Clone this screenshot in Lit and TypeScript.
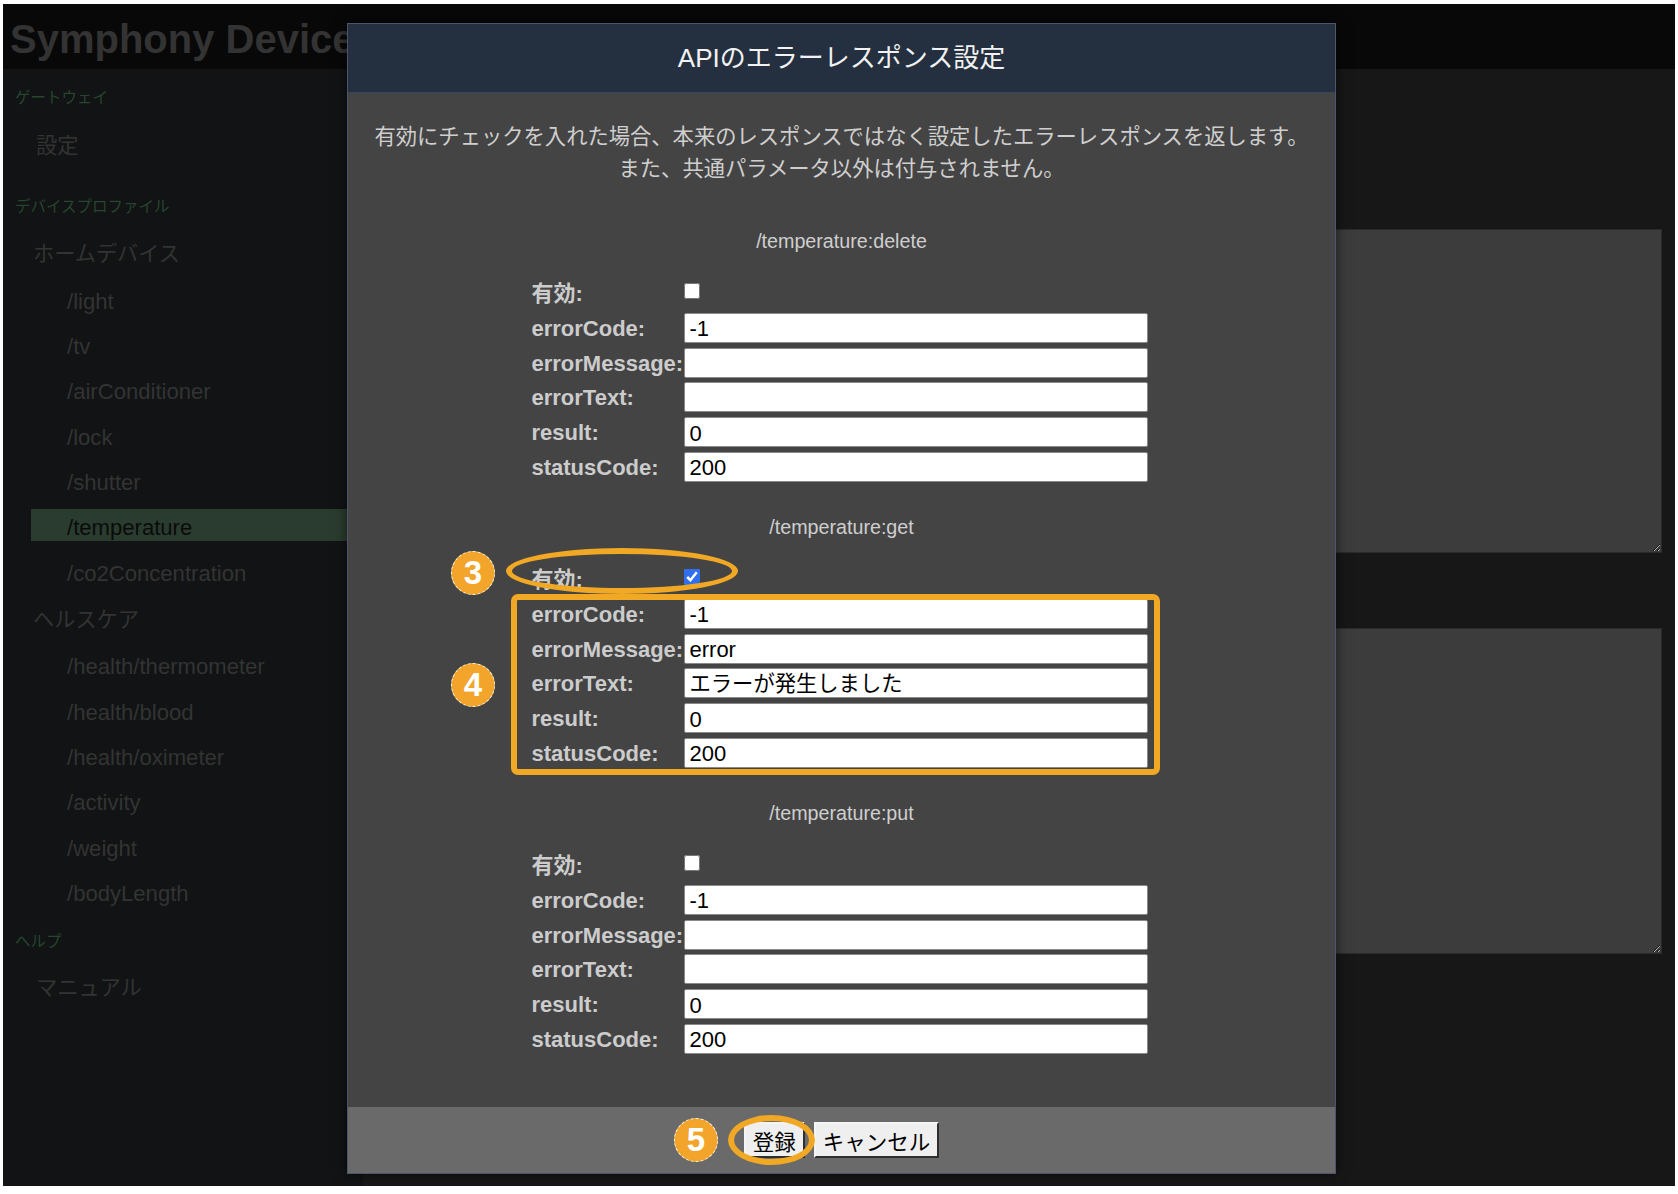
import { LitElement, css, html } from 'lit';
import { customElement } from 'lit/decorators.js';

const HOME = ['/light', '/tv', '/airConditioner', '/lock', '/shutter', '/temperature', '/co2Concentration'];
const HEALTH = ['/health/thermometer', '/health/blood', '/health/oximeter', '/activity', '/weight', '/bodyLength'];

const SECTIONS = [
  { title: '/temperature:delete', enabled: false, message: '', text: '' },
  { title: '/temperature:get', enabled: true, message: 'error', text: 'エラーが発生しました' },
  { title: '/temperature:put', enabled: false, message: '', text: '' },
];

@customElement('app-root')
export class AppRoot extends LitElement {
  static get styles() {
    return css`
      :host {
        display: block;
        padding: 4px 3px 8px 3px;
        background: #fff;
        font-family: "Liberation Sans", "Noto Sans CJK JP", sans-serif;
      }
      .page {
        position: relative;
        height: 1182px;
        background: #171717;
        display: flex;
        flex-direction: column;
        overflow: hidden;
      }
      .topbar {
        height: 65px;
        background: #080808;
        flex: none;
      }
      .topbar h1 {
        margin: 0;
        padding-left: 7px;
        font-size: 40px;
        line-height: 71px;
        font-weight: 700;
        color: #333;
        white-space: nowrap;
      }
      .content {
        flex: 1;
        display: flex;
      }
      .sidebar {
        width: 360px;
        flex: none;
        background: #111314;
        padding: 17px 0 0 0;
        display: flex;
        flex-direction: column;
      }
      .heading {
        height: 24px;
        line-height: 24px;
        font-size: 15.5px;
        color: #26462f;
        padding-left: 12px;
        margin-bottom: 21px;
      }
      .heading.tight {
        margin-bottom: 16px;
      }
      .heading.help {
        margin-top: 9.5px;
        margin-bottom: 19px;
      }
      .link {
        height: 32px;
        line-height: 30px;
        font-size: 21.3px;
        color: #333;
        padding-left: 33px;
        margin-bottom: 31.5px;
      }
      .category {
        height: 32px;
        line-height: 32px;
        font-size: 21.2px;
        color: #333;
        padding-left: 30px;
        margin-top: 3.5px;
        margin-bottom: 12.5px;
      }
      .item {
        height: 32px;
        line-height: 38px;
        font-size: 22.1px;
        color: #333;
        margin: 0 0 13.4px 28px;
        padding-left: 36px;
      }
      .item.active {
        background: #2a3c2f;
        color: #0b0b0b;
      }
      .main {
        flex: 1;
        padding: 160px 13px 0 0;
        display: flex;
        flex-direction: column;
        gap: 75px;
      }
      .main textarea {
        display: block;
        box-sizing: border-box;
        width: 100%;
        background: #3c3c3c;
        border: 1px solid #2b2b2b;
        margin: 0;
      }
      .ta1 {
        height: 324px;
      }
      .ta2 {
        height: 326px;
      }
      .modal {
        position: absolute;
        left: 344px;
        top: 19px;
        width: 989px;
        height: 1151px;
        box-sizing: border-box;
        border: 1px solid #4b566b;
        box-shadow: 0 0 12px rgba(0, 0, 0, 0.6);
        display: flex;
        flex-direction: column;
        background: #444;
      }
      .modal-head {
        height: 69px;
        flex: none;
        box-sizing: border-box;
        background: #243040;
        border-bottom: 1px solid #34465c;
        color: #f2f2f2;
        font-size: 26px;
        line-height: 68px;
        text-align: center;
      }
      .modal-body {
        flex: 1;
        padding-top: 27.5px;
        color: #cfcfcf;
      }
      .desc {
        margin: 0 0 43.5px;
        font-size: 21.3px;
        line-height: 32.5px;
        text-align: center;
      }
      .section {
        margin-bottom: 30.6px;
      }
      .section-title {
        height: 24px;
        line-height: 24px;
        font-size: 19.7px;
        text-align: center;
        margin-bottom: 22.6px;
      }
      .form {
        width: 620px;
        margin: 0 auto;
        display: grid;
        grid-template-columns: 152px 464px;
        grid-auto-rows: 34.8px;
        align-items: center;
      }
      .form label {
        font-size: 22px;
        line-height: 30px;
        padding-top: 2px;
        font-weight: 700;
        color: #cccccc;
      }
      .form input[type='text'] {
        box-sizing: border-box;
        height: 30px;
        width: 100%;
        margin: 0;
        padding: 3px 4px 0 5px;
        background: #fff;
        border: 1px solid #8a8a8a;
        border-radius: 2px;
        font: 22px "Liberation Sans", "Noto Sans CJK JP", sans-serif;
        color: #000;
      }
      .form input.ja[type='text'] {
        padding: 0 4px 3px 5px;
        font-size: 21.3px;
      }
      .form input[type='checkbox'] {
        width: 16px;
        height: 16px;
        margin: 0;
        accent-color: #2f6fed;
      }
      .modal-foot {
        height: 66px;
        flex: none;
        background: #6a6a6a;
        display: flex;
        align-items: center;
        justify-content: center;
        gap: 9px;
      }
      .modal-foot button {
        box-sizing: border-box;
        height: 36px;
        padding: 0 7px;
        background: #efefef;
        border: 2px solid;
        border-color: #f4f4f4 #2e2e2e #2e2e2e #f4f4f4;
        font: 21.5px "Liberation Sans", "Noto Sans CJK JP", sans-serif;
        color: #000;
      }
      .badge {
        position: absolute;
        width: 44px;
        height: 44px;
        border-radius: 50%;
        background: #f2a52a;
        border: 1px dashed #fff;
        box-sizing: border-box;
        color: #fff;
        font-size: 33px;
        font-weight: 700;
        line-height: 42px;
        text-align: center;
      }
      .b3 {
        left: 448px;
        top: 547px;
      }
      .b4 {
        left: 448px;
        top: 659px;
      }
      .b5 {
        left: 671px;
        top: 1114px;
      }
      .ring {
        position: absolute;
        box-sizing: border-box;
        border: 6px solid #f0a825;
        border-radius: 50%;
      }
      .r1 {
        left: 503px;
        top: 544px;
        width: 232px;
        height: 46px;
      }
      .r2 {
        left: 725px;
        top: 1111px;
        width: 87px;
        height: 50px;
      }
      .box {
        position: absolute;
        box-sizing: border-box;
        left: 508px;
        top: 589.5px;
        width: 649px;
        height: 181.5px;
        border: 6px solid #f0a825;
        border-radius: 7px;
      }
    `;
  }

  renderSection(s: { title: string; enabled: boolean; message: string; text: string }) {
    return html`
      <div class="section">
        <div class="section-title">${s.title}</div>
        <div class="form">
          <label>有効:</label>
          <div><input type="checkbox" .checked=${s.enabled} /></div>
          <label>errorCode:</label>
          <input type="text" .value=${'-1'} />
          <label>errorMessage:</label>
          <input type="text" .value=${s.message} />
          <label>errorText:</label>
          <input class="ja" type="text" .value=${s.text} />
          <label>result:</label>
          <input type="text" .value=${'0'} />
          <label>statusCode:</label>
          <input type="text" .value=${'200'} />
        </div>
      </div>
    `;
  }

  render() {
    return html`
      <div class="page">
        <header class="topbar"><h1>Symphony Device Gateway</h1></header>
        <div class="content">
          <nav class="sidebar">
            <div class="heading">ゲートウェイ</div>
            <div class="link">設定</div>
            <div class="heading tight">デバイスプロファイル</div>
            <div class="category">ホームデバイス</div>
            ${HOME.map((n) => html`<div class="item ${n === '/temperature' ? 'active' : ''}">${n}</div>`)}
            <div class="category">ヘルスケア</div>
            ${HEALTH.map((n) => html`<div class="item">${n}</div>`)}
            <div class="heading help">ヘルプ</div>
            <div class="link">マニュアル</div>
          </nav>
          <main class="main">
            <textarea class="ta1"></textarea>
            <textarea class="ta2"></textarea>
          </main>
        </div>

        <div class="modal">
          <div class="modal-head">APIのエラーレスポンス設定</div>
          <div class="modal-body">
            <p class="desc">
              有効にチェックを入れた場合、本来のレスポンスではなく設定したエラーレスポンスを返します。<br />
              また、共通パラメータ以外は付与されません。
            </p>
            ${SECTIONS.map((s) => this.renderSection(s))}
          </div>
          <div class="modal-foot">
            <button>登録</button>
            <button>キャンセル</button>
          </div>
        </div>

        <div class="badge b3">3</div>
        <div class="badge b4">4</div>
        <div class="badge b5">5</div>
        <div class="ring r1"></div>
        <div class="ring r2"></div>
        <div class="box"></div>
      </div>
    `;
  }
}
